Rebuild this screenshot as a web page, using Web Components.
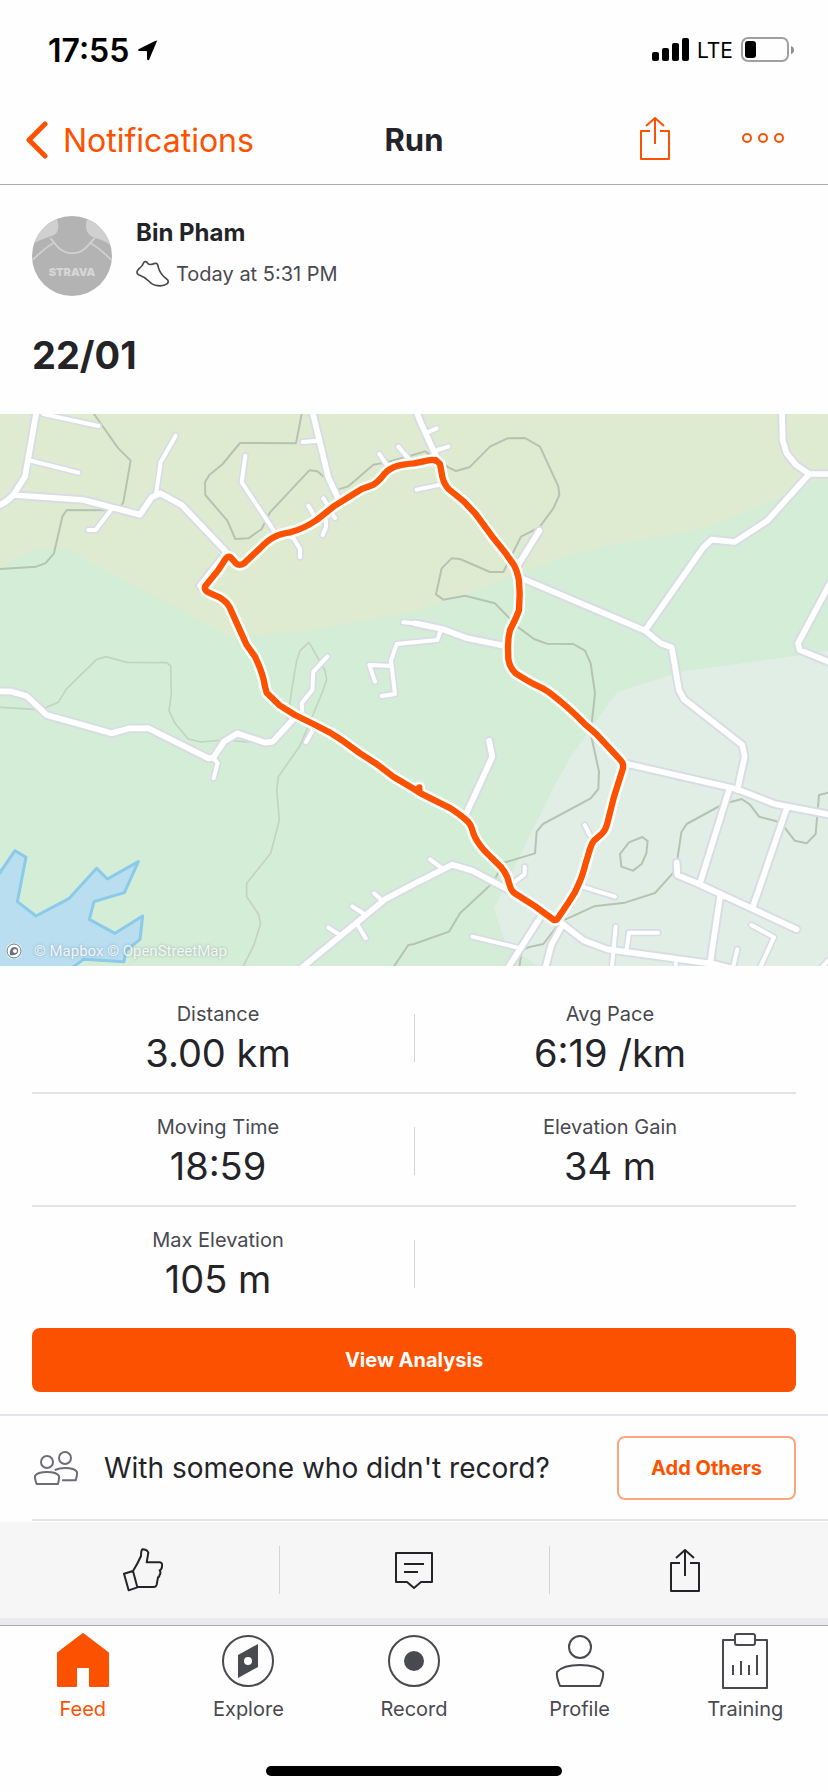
<!DOCTYPE html>
<html lang="en">
<head>
<meta charset="utf-8">
<meta name="viewport" content="width=device-width, initial-scale=1">
<title>Run</title>
<style>
    :root {
        --orange: #fc5200;
        --ink: #242428;
        --gray: #494950;
        --line: #e3e3e9;
        --bar-line: #a9a9ae;
        --gutter: 32px;
    }

    body {
        margin: 0;
        background: #fefefe;
        color: var(--ink);
        font-family: Inter, "Liberation Sans", sans-serif;
        font-weight: 400;
    }
</style>
</head>
<body>
<activity-screen>
    <status-bar slot="top" time="17:55" network="LTE"></status-bar>
    <nav-header slot="top" back="Notifications">Run</nav-header>

    <activity-summary athlete="Bin Pham" when="Today at 5:31 PM">22/01</activity-summary>
    <route-map></route-map>
    <stat-list>
        <stat-row>
            <stat-cell label="Distance">3.00 km</stat-cell>
            <stat-cell label="Avg Pace">6:19 /km</stat-cell>
        </stat-row>
        <stat-row>
            <stat-cell label="Moving Time">18:59</stat-cell>
            <stat-cell label="Elevation Gain">34 m</stat-cell>
        </stat-row>
        <stat-row>
            <stat-cell label="Max Elevation">105 m</stat-cell>
        </stat-row>
    </stat-list>
    <action-button class="analysis" kind="primary">View Analysis</action-button>
    <group-prompt>
        With someone who didn't record?
        <action-button slot="action" kind="outline">Add Others</action-button>
    </group-prompt>
    <social-bar></social-bar>

    <tab-bar slot="bottom">
        <tab-item icon="feed" active>Feed</tab-item>
        <tab-item icon="explore">Explore</tab-item>
        <tab-item icon="record">Record</tab-item>
        <tab-item icon="profile">Profile</tab-item>
        <tab-item icon="training">Training</tab-item>
    </tab-bar>
</activity-screen>

<script>
class ShadowElement extends HTMLElement {
    constructor() {
        super();

        this.attachShadow({mode: "open"});
    }

    _render() {
        return "";
    }

    connectedCallback() {
        this.shadowRoot.innerHTML = this._render();
    }
}

class ActivityScreen extends ShadowElement {
    _render() {
        return `
            <style>
                :host {
                    display: flex;
                    flex-direction: column;
                    min-height: 100vh;
                }
                main {
                    flex: 1;
                    display: flex;
                    flex-direction: column;
                }
                ::slotted(.analysis) {
                    margin: 10px var(--gutter) 22px;
                }
            </style>
            <header><slot name="top"></slot></header>
            <main><slot></slot></main>
            <slot name="bottom"></slot>
        `;
    }
}
customElements.define("activity-screen", ActivityScreen);

class StatusBar extends ShadowElement {
    _render() {
        return `
            <style>
                :host {
                    display: flex;
                    justify-content: space-between;
                    align-items: center;
                    height: 100px;
                    padding: 0 34px 0 48px;
                    color: black;
                }
                div {
                    display: flex;
                    align-items: center;
                    gap: 8px;
                }
                .time {
                    font-size: 32px;
                    font-weight: 600;
                }
                .network {
                    font-size: 21px;
                }
                svg {
                    display: block;
                }
            </style>
            <div>
                <span class="time">${this.getAttribute("time")}</span>
                <svg width="21" height="21" viewBox="0 0 21 21"><path d="M20 1 12 20Q11 21 10 19V12Q10 11 9 11H2Q0 10 2 9L18 1Q21 0 20 1Z"/></svg>
            </div>
            <div>
                <svg width="37" height="24" viewBox="0 0 37 24">
                    <rect y="14" width="7" height="9" rx="2"/>
                    <rect x="10" y="10" width="7" height="13" rx="2"/>
                    <rect x="20" y="5" width="7" height="18" rx="2"/>
                    <rect x="30" width="7" height="23" rx="2"/>
                </svg>
                <span class="network">${this.getAttribute("network")}</span>
                <svg width="53" height="26" viewBox="0 0 53 26">
                    <rect x="1" y="1" width="46" height="23" rx="6" fill="none" stroke="#a0a0a0" stroke-width="2"/>
                    <rect x="4" y="4" width="11" height="17" rx="3"/>
                    <path d="M50 9Q53 10 53 13T50 17Z" fill="#8f8f8f"/>
                </svg>
            </div>
        `;
    }
}
customElements.define("status-bar", StatusBar);

const SHARE_ICON = `
    <svg width="30" height="43" viewBox="0 0 30 43" fill="none" stroke="currentColor" stroke-width="2" stroke-linejoin="round">
        <path d="M10 14H1V42H29V14H20M15 27V1M6 9 15 1 24 9"/>
    </svg>
`;

class NavHeader extends ShadowElement {
    _render() {
        return `
            <style>
                :host {
                    display: grid;
                    grid-template-columns: 1fr auto 1fr;
                    align-items: center;
                    height: 80px;
                    padding: 0 44px 4px 26px;
                    border-bottom: 1px solid var(--bar-line);
                }
                a {
                    display: flex;
                    align-items: center;
                    gap: 14px;
                    color: var(--orange);
                    font-size: 32px;
                    text-decoration: none;
                }
                h1 {
                    margin: 0 0 0 18px;
                    font-size: 31px;
                    line-height: 40px;
                    font-weight: 700;
                }
                .tools {
                    display: flex;
                    align-items: center;
                    justify-content: flex-end;
                    gap: 72px;
                    padding-bottom: 4px;
                }
                button {
                    padding: 0;
                    border: 0;
                    background: none;
                    color: var(--orange);
                }
                svg {
                    display: block;
                }
            </style>
            <a href="#notifications">
                <svg width="23" height="38" viewBox="0 0 23 38" fill="none" stroke="currentColor" stroke-width="5" stroke-linecap="round" stroke-linejoin="round"><path d="M19 3 3 19 19 35"/></svg>
                ${this.getAttribute("back")}
            </a>
            <h1><slot></slot></h1>
            <div class="tools">
                <button aria-label="Share">${SHARE_ICON}</button>
                <button aria-label="More">
                    <svg width="42" height="10" viewBox="0 0 42 10" fill="none" stroke="currentColor" stroke-width="2"><circle cx="5" cy="5" r="4"/><circle cx="21" cy="5" r="4"/><circle cx="37" cy="5" r="4"/></svg>
                </button>
            </div>
        `;
    }
}
customElements.define("nav-header", NavHeader);

class ActivitySummary extends ShadowElement {
    _render() {
        return `
            <style>
                :host {
                    display: block;
                    padding: 31px var(--gutter) 34px;
                }
                .athlete {
                    display: flex;
                    gap: 24px;
                }
                h2, h3, p {
                    margin: 0;
                }
                h3 {
                    font-size: 24px;
                    line-height: 34px;
                    font-weight: 700;
                }
                p {
                    display: flex;
                    align-items: center;
                    gap: 7px;
                    margin-top: 8px;
                    color: var(--gray);
                    font-size: 20px;
                    line-height: 32px;
                }
                h2 {
                    margin-top: 34px;
                    font-size: 38px;
                    line-height: 50px;
                    font-weight: 700;
                }
            </style>
            <div class="athlete">
                <svg width="80" height="80" viewBox="0 0 240 240">
                    <clipPath id="round"><circle cx="120" cy="120" r="120"/></clipPath>
                    <g clip-path="url(#round)">
                        <rect width="240" height="240" fill="#b3b3b3"/>
                        <path d="M0 85V0H70Q82 18 78 40 76 58 50 63 25 70 0 85ZM240 85V0H172Q158 18 163 40 166 58 190 66 215 72 240 90Z" fill="#d0d0d0"/>
                        <path d="M55 66Q66 80 76 92 95 112 121 112 147 112 165 92 178 78 188 66" fill="none" stroke="#d0d0d0" stroke-width="6"/>
                        <path d="M66 80Q35 98 0 134M174 80Q205 98 240 134" fill="none" stroke="#d0d0d0" stroke-width="5"/>
                        <text x="120" y="180" fill="#d6d6d6" font-family="Inter, sans-serif" font-weight="900" font-size="33" text-anchor="middle">STRAVA</text>
                    </g>
                </svg>
                <div>
                    <h3>${this.getAttribute("athlete")}</h3>
                    <p>
                        <svg width="33" height="28" viewBox="0 0 99 84" fill="none" stroke="currentColor" stroke-width="5" stroke-linejoin="round"><path d="M28 5Q32 4 35 10 40 17 58 10 65 8 67 22 72 42 92 57 100 62 94 71 84 79 65 77 50 76 38 63 25 50 8 44-2 39 8 27 20 18 23 8 25 4 28 5Z"/></svg>
                        ${this.getAttribute("when")}
                    </p>
                </div>
            </div>
            <h2><slot></slot></h2>
        `;
    }
}
customElements.define("activity-summary", ActivitySummary);

// All paths share one 2484 x 1656 canvas, three units to a point.
class RouteMap extends ShadowElement {
    _render() {
        return `
            <style>
                :host {
                    display: block;
                    position: relative;
                }
                svg {
                    display: block;
                    width: 100%;
                }
                .lines {
                    fill: none;
                    stroke-linecap: round;
                    stroke-linejoin: round;
                }
                .credit {
                    position: absolute;
                    left: 6px;
                    bottom: 5px;
                    display: flex;
                    align-items: center;
                    gap: 11px;
                    color: rgba(255, 255, 255, 0.85);
                    font-family: Roboto, sans-serif;
                    font-size: 15px;
                    line-height: 20px;
                    text-shadow: 0 0 3px rgba(90, 110, 130, 0.5);
                }
                .credit svg {
                    width: 17px;
                }
            </style>
            <svg viewBox="0 0 2484 1656" role="img" aria-label="Route map">
                <defs>
                    <path id="major" d="${RouteMap.MAJOR_ROADS}"/>
                    <path id="minor" d="${RouteMap.MINOR_ROADS}"/>
                    <path id="route" d="${RouteMap.ROUTE}"/>
                </defs>
                <rect width="2484" height="1656" fill="#d4edd7"/>
                <path fill="#deebd1" d="M0 0H2484V195L2422 210 2332 253 2132 338 1802 400 1702 423 1572 473 1412 536 1242 593 900 653 690 668 200 405 100 406 0 458Z"/>
                <path fill="#e1eee6" d="M2484 710 2382 726 2042 773 1872 828 1852 833 1787 923 1712 1028 1657 1128 1482 1483 1517 1588 1612 1656H2484Z"/>
                <path fill="#b8def0" stroke="#8bcae8" stroke-width="9" stroke-linejoin="round" d="M-10 1390 45 1310 78 1330 52 1463 108 1506 208 1453 290 1363 322 1395 415 1343 373 1436 282 1463 268 1516 345 1558 428 1506 420 1576 378 1610 372 1643 250 1636 205 1670H-10Z"/>
                <g class="lines">
                    <path stroke="#c3d3c1" stroke-width="5" d="${RouteMap.FAINT_CONTOURS}"/>
                    <path stroke="#b6c3b1" stroke-width="6" d="${RouteMap.CONTOURS}"/>
                    <use href="#minor" stroke="#d8dde5" stroke-width="22"/>
                    <use href="#major" stroke="#d8dde5" stroke-width="29"/>
                    <use href="#minor" stroke="#fff" stroke-width="12"/>
                    <use href="#major" stroke="#fff" stroke-width="17"/>
                    <use href="#route" stroke="#fff" stroke-width="34"/>
                    <use href="#route" stroke="#fc5200" stroke-width="19"/>
                </g>
            </svg>
            <div class="credit">
                <svg viewBox="0 0 17 17"><circle cx="8" cy="8" r="8" fill="#fff"/><circle cx="8" cy="8" r="7" fill="none" stroke="#66737c"/><path d="M4 12Q3 4 9 4 13 5 12 9 10 13 4 12Z" fill="#66737c"/><circle cx="9" cy="8" r="2" fill="#fff"/></svg>
                <span>© Mapbox © OpenStreetMap</span>
            </div>
        `;
    }
}
RouteMap.ROUTE = `
    M1307 138 1320 150 1327 188Q1332 212 1347 226L1392 263 1427 300 1477 368 1517 418 1543 455Q1552 472 1557 500
    L1559 540 1557 588Q1552 605 1530 648 1524 670 1524 698L1525 735Q1529 762 1547 778 1565 790 1597 808L1630 824
    Q1650 835 1682 863 1715 890 1752 928L1787 958 1863 1040Q1871 1048 1869 1063L1842 1148 1822 1228Q1817 1248 1807 1258
    L1782 1280Q1775 1288 1770 1305L1757 1348Q1748 1385 1737 1408 1727 1435 1707 1463L1672 1515Q1668 1520 1660 1517
    L1607 1478 1543 1437Q1532 1428 1529 1413L1522 1390Q1514 1372 1502 1358L1455 1312Q1428 1282 1420 1258
    1414 1233 1404 1223 1385 1205 1352 1183L1262 1138 1242 1125 1180 1088 1130 1050 1080 1018 1025 978 990 956 940 930
    885 903 840 875 800 836 795 818Q790 780 765 728L740 693 715 638 688 578Q680 563 660 551L625 535Q611 528 616 516
    L655 468 675 437Q684 425 692 430L708 448Q718 457 732 448L780 403Q805 377 825 368 840 360 870 355
    Q910 345 950 318L1000 278 1085 225 1120 212Q1132 205 1145 190 1158 170 1180 160 1200 151 1242 148L1285 139Q1300 136 1307 140
    M1258 1135V1120
`;
RouteMap.MAJOR_ROADS = `
    M110-10 75 188 40 243Q20 265-5 275M40 243 250 258 420 302 455 250 480 238 545 273 680 415 600 515M938-5 985 190 1015 255
    M1250-5 1262 25 1312 135M1618 350 1550 460M1570 495 1935 650 1982 688 2015 700 2037 828 2052 856 2227 993 2234 1028 2212 1128
    M1935 650 2110 400 2135 377 2204 384 2302 320 2428 180H2490M2346-5 2348 80 2360 118 2388 153 2428 180
    M2490 508 2394 688 2399 708 2490 745M-5 832 35 833 80 846 140 903 335 958 390 943H445L625 1033 640 1031 672 983 712 958 795 986 818 983 885 910
    M895 1670 1155 1456 1242 1410 1357 1352 1417 1370 1532 1431M1882 1050 2212 1126 2327 1171 2490 1202
    M2187 1128 2099 1411M2362 1178 2257 1483M2030 1346 2032 1383 2099 1411 2390 1546M2160 1448 2128 1665
    M1622 1508 1522 1665M1672 1518 1752 1580 1822 1606 2142 1650 2200 1665M1687 1533 1654 1593 1635 1665
    M1245 628 1327 645 1402 673 1512 695M1467 980 1477 1028 1399 1198
`;
RouteMap.MINOR_ROADS = `
    M130 0 295 36M85 138 235 176M527 65 482 145 468 240M335 285 287 348H265M736 125 725 205 825 355 880 372 900 405V430
    M908 84 955 80M1138 120 1165 160M1195 98 1235 145M970 253 1005 312M925 275 945 310M978 320V340L968 363
    M1285 54 1310 43M1312 108 1345 98M1250 227 1322 212M1210 625 1245 628M1322 650 1312 678 1190 690 1173 740 1185 840 1145 846
    M1175 756 1108 753 1125 803M982 728 940 773 937 828 905 868 907 898M640 1031 653 1048 641 1093M940 945 918 985
    M1122 1438 1145 1458M1057 1477 1092 1500M985 1541 1018 1562M1070 1528 1097 1573M1290 1336 1327 1363
    M1574 1358V1381L1537 1408M1754 1233 1772 1268M1747 1418 1845 1448M1417 1568 1562 1603M1847 1538 1835 1665
    M1974 1556H1887L1879 1613M2027 1648V1665M2254 1533 2322 1570 2278 1665M2212 1606 2198 1665M2487 1638 2460 1665
`;
RouteMap.CONTOURS = `
    M282 0 355 103 392 140 370 265 352 289 200 288 187 308 162 418 136 448 108 458 0 465
    M905 0 888 88 720 87 668 150 628 183 615 205 616 243 682 320 706 375 745 373 785 345 810 295 928 169 952 172 1015 226
    1045 217 1120 152 1160 145 1242 122 1275 112 1345 160 1368 171 1408 160 1470 98 1522 73 1575 72 1620 98 1675 217 1678 243
    1660 283 1618 340 1563 368 1510 474 1470 474 1380 435 1355 433 1325 463 1308 541 1330 557 1395 545 1485 568 1555 640
    1602 675 1640 689 1720 690 1755 710 1772 748 1785 838 1772 958 1797 1073 1795 1125 1772 1153 1629 1230 1610 1253
    1605 1318 1512 1346 1477 1408 1380 1498 1347 1553 1242 1590 1225 1593 1180 1660
    M1860 1320 1887 1285 1927 1269 1943 1281 1939 1318 1925 1350 1899 1370 1864 1358Z
    M2490 1135 2457 1143 2447 1260 2420 1288 2384 1280 2352 1238 2330 1222 2277 1208 2250 1172 2225 1155 2170 1170 2060 1230
    2044 1255 2030 1350 2018 1378 1965 1437 1875 1466 1782 1477 1682 1523 1630 1590 1585 1600 1565 1610 1558 1660
`;
RouteMap.FAINT_CONTOURS = `
    M0 880 105 886 140 880 175 865 200 824 290 736 318 728 380 745 500 746 512 756 514 840 507 890 525 928 565 975 602 984
    670 978 790 988 830 983 858 953 875 828 890 740 900 710 927 685 975 770 980 797 965 840 900 995 835 1088 830 1128
    838 1218 812 1318 740 1408V1448L775 1500 782 1528 762 1593 728 1660
`;
customElements.define("route-map", RouteMap);

class StatList extends ShadowElement {
    _render() {
        return `
            <style>
                :host {
                    display: block;
                    padding: 15px var(--gutter) 0;
                }
                ::slotted(stat-row:not(:last-child)) {
                    border-bottom: 2px solid var(--line);
                }
            </style>
            <slot></slot>
        `;
    }
}
customElements.define("stat-list", StatList);

class StatRow extends ShadowElement {
    _render() {
        return `
            <style>
                :host {
                    display: grid;
                    grid-template-columns: 1fr 1fr;
                    gap: 20px;
                    height: 111px;
                    background: linear-gradient(#d4d4d8, #d4d4d8) 50% 33px / 1px 48px no-repeat;
                }
            </style>
            <slot></slot>
        `;
    }
}
customElements.define("stat-row", StatRow);

class StatCell extends ShadowElement {
    _render() {
        return `
            <style>
                :host {
                    display: block;
                    text-align: center;
                }
                dl, dd {
                    margin: 0;
                }
                dl {
                    padding-top: 19px;
                }
                dt {
                    color: var(--gray);
                    font-size: 20px;
                    line-height: 28px;
                }
                dd {
                    font-size: 38px;
                    line-height: 50px;
                }
            </style>
            <dl>
                <dt>${this.getAttribute("label")}</dt>
                <dd><slot></slot></dd>
            </dl>
        `;
    }
}
customElements.define("stat-cell", StatCell);

class ActionButton extends ShadowElement {
    _render() {
        return `
            <style>
                :host {
                    display: block;
                }
                button {
                    box-sizing: border-box;
                    width: 100%;
                    height: 64px;
                    padding: 0 32px;
                    border: 2px solid var(--orange);
                    border-radius: 8px;
                    background: var(--orange);
                    color: white;
                    font: 700 20px Inter, "Liberation Sans", sans-serif;
                }
                :host([kind="outline"]) button {
                    border-color: #fda47c;
                    background: none;
                    color: var(--orange);
                }
            </style>
            <button><slot></slot></button>
        `;
    }
}
customElements.define("action-button", ActionButton);

class GroupPrompt extends ShadowElement {
    _render() {
        return `
            <style>
                :host {
                    display: block;
                    padding-left: var(--gutter);
                    border-top: 2px solid var(--line);
                }
                div {
                    display: flex;
                    align-items: center;
                    height: 103px;
                    margin-bottom: 1px;
                    padding-right: var(--gutter);
                    border-bottom: 2px solid var(--line);
                }
                svg {
                    margin: 0 26px 0 2px;
                }
                p {
                    flex: 1;
                    margin: 0;
                    font-size: 28px;
                    line-height: 36px;
                }
            </style>
            <div>
                <svg width="44" height="34" viewBox="0 0 132 102" fill="none" stroke="#6d6d78" stroke-width="6" stroke-linejoin="round">
                    <circle cx="39" cy="33" r="18"/><circle cx="93" cy="21" r="18"/>
                    <path d="M8 99Q2 84 3 75 10 63 39 63 68 63 75 75 76 84 72 99Z"/>
                    <path d="M62 57Q77 51 93 51 122 51 129 63 130 73 125 88H84"/>
                </svg>
                <p><slot></slot></p>
                <slot name="action"></slot>
            </div>
        `;
    }
}
customElements.define("group-prompt", GroupPrompt);

class SocialBar extends ShadowElement {
    _render() {
        return `
            <style>
                :host {
                    display: grid;
                    grid-template-columns: repeat(3, 1fr);
                    align-items: center;
                    height: 96px;
                    padding: 0 8px;
                    background: #f6f6f6;
                    border-bottom: 7px solid #ebebef;
                }
                button {
                    display: grid;
                    place-items: center;
                    height: 48px;
                    padding: 0;
                    border: 0;
                    background: none;
                    color: var(--ink);
                }
                button + button {
                    border-left: 1px solid #d4d4d8;
                }
                svg {
                    display: block;
                }
            </style>
            <button aria-label="Give kudos">
                <svg width="40" height="44" viewBox="0 0 120 132" fill="none" stroke="currentColor" stroke-width="6" stroke-linejoin="round"><path d="M3 77 30 69 43 118 17 127ZM30 69Q44 47 54 24 54 7 58 4 72 4 76 14L71 43H110Q119 44 117 55 117 64 110 67 115 75 109 82 110 87 105 88L101 110Q99 117 92 117H43"/></svg>
            </button>
            <button aria-label="Comment">
                <svg width="38" height="38" viewBox="0 0 38 38" fill="none" stroke="currentColor" stroke-width="2" stroke-linejoin="round"><path d="M1 2H37V31H26L19 37 12 31H1ZM9 13H29M9 21H23"/></svg>
            </button>
            <button aria-label="Share">${SHARE_ICON}</button>
        `;
    }
}
customElements.define("social-bar", SocialBar);

class TabBar extends ShadowElement {
    _render() {
        return `
            <style>
                :host {
                    display: block;
                    border-top: 1px solid var(--bar-line);
                    background: #fefefe;
                }
                nav {
                    display: grid;
                    grid-auto-flow: column;
                    grid-auto-columns: 1fr;
                    height: 140px;
                }
                .home {
                    width: 296px;
                    height: 10px;
                    margin: 0 auto 16px;
                    border-radius: 5px;
                    background: black;
                }
            </style>
            <nav><slot></slot></nav>
            <div class="home"></div>
        `;
    }
}
customElements.define("tab-bar", TabBar);

class TabItem extends ShadowElement {
    _render() {
        return `
            <style>
                :host {
                    display: block;
                    color: var(--gray);
                }
                :host([active]) {
                    color: var(--orange);
                }
                a {
                    display: flex;
                    flex-direction: column;
                    align-items: center;
                    gap: 5px;
                    padding-top: 6px;
                    color: inherit;
                    font-size: 20px;
                    line-height: 28px;
                    text-decoration: none;
                }
            </style>
            <a href="#${this.getAttribute("icon")}">
                <svg width="58" height="58" viewBox="0 0 58 58" fill="none" stroke="currentColor" stroke-width="2" stroke-linejoin="round">${TabItem.ICONS[this.getAttribute("icon")]}</svg>
                <span><slot></slot></span>
            </a>
        `;
    }
}
TabItem.ICONS = {
    feed: `<path d="M29 2 54 21V54H36V35H22V54H4V21Z" fill="currentColor"/>`,
    explore: `<circle cx="29" cy="29" r="25"/><path d="M19 23 39 12V35L19 46ZM29 25A4 4 0 1 0 29 33 4 4 0 1 0 29 25Z" fill="currentColor" fill-rule="evenodd" stroke="none"/>`,
    record: `<circle cx="29" cy="29" r="25"/><circle cx="29" cy="29" r="10" fill="currentColor" stroke="none"/>`,
    profile: `<circle cx="29" cy="15" r="11"/><path d="M9 54Q5 44 6 40 12 33 29 33 46 33 52 40 53 44 49 54Z"/>`,
    training: `<path d="M18 8H7V56H51V8H40"/><rect x="19" y="2" width="20" height="11" rx="2"/><path d="M17 33V43M25 29V43M33 33V43M41 23V43"/>`
};
customElements.define("tab-item", TabItem);
</script>
</body>
</html>
